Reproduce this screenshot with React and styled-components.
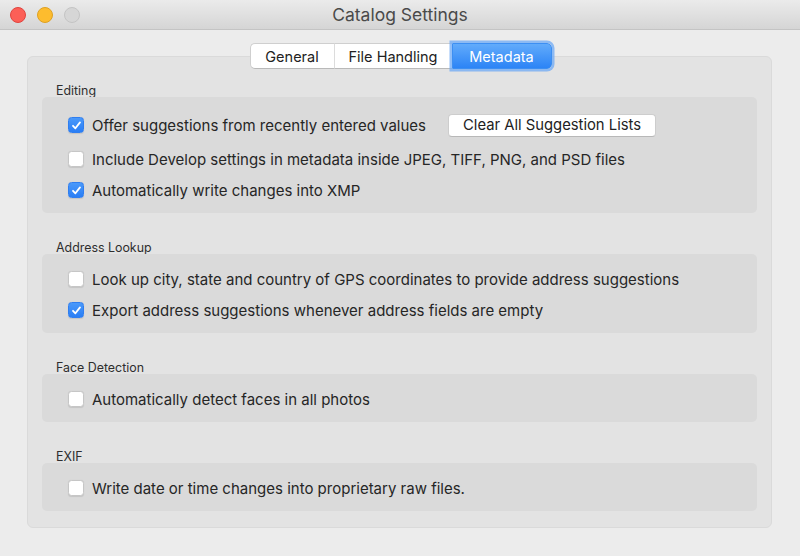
import styled, { createGlobalStyle } from "styled-components";

const GlobalStyle = createGlobalStyle`
  html, body {
    margin: 0;
    padding: 0;
    background: #ececec;
  }
  * {
    box-sizing: border-box;
  }
`;

const Window = styled.div`
  width: 800px;
  height: 556px;
  display: flex;
  flex-direction: column;
  background: #ececec;
  font-family: Inter, "Noto Sans", sans-serif;
  color: #262626;
  overflow: hidden;
`;

const TitleBar = styled.div`
  height: 30px;
  flex-shrink: 0;
  display: flex;
  align-items: center;
  padding-left: 10px;
  background: linear-gradient(#ebebeb, #d5d5d5);
  border-bottom: 1px solid #c4c4c4;
  position: relative;
`;

const Lights = styled.div`
  display: flex;
  gap: 11px;
`;

const Light = styled.span`
  width: 16px;
  height: 16px;
  border-radius: 50%;
  background: ${({ color }) => color};
  border: 1px solid ${({ edge }) => edge};
`;

const Title = styled.div`
  position: absolute;
  left: 0;
  right: 0;
  text-align: center;
  font-size: 17.5px;
  color: #4a4a4a;
  pointer-events: none;
`;

const Body = styled.div`
  flex: 1;
  display: flex;
  flex-direction: column;
  padding: 13px 28px 28px 27px;
`;

const Tabs = styled.div`
  align-self: center;
  display: flex;
  height: 26px;
  margin-left: 2px;
  position: relative;
  z-index: 1;
`;

const Tab = styled.div`
  width: ${({ w }) => w}px;
  display: flex;
  align-items: center;
  justify-content: center;
  font-size: 14.5px;
  background: #fff;
  border-top: 1px solid #cfcfcf;
  border-bottom: 1px solid #b9b9b9;
  border-left: 1px solid #dcdcdc;
  color: #222;

  &:first-child {
    border-left: 1px solid #cfcfcf;
    border-radius: 5px 0 0 5px;
  }

  ${({ active }) =>
    active &&
    `
    background: linear-gradient(#62abfb, #2c84f6);
    color: #fff;
    border: 1px solid #3d8ff2;
    border-radius: 0 5px 5px 0;
    box-shadow: 0 0 0 2.5px rgba(110, 170, 245, 0.75);
  `}
`;

const Panel = styled.div`
  flex: 1;
  margin-top: -13px;
  background: #e3e3e3;
  border: 1px solid #dadada;
  border-radius: 6px;
  padding: 24px 14px 15px;
  display: flex;
  flex-direction: column;
  gap: 25px;
`;

const Group = styled.div`
  display: flex;
  flex-direction: column;
`;

const GroupLabel = styled.div`
  font-size: 12.4px;
  line-height: 13px;
  padding-top: 3px;
  padding-left: 14px;
  color: #2e2e2e;
`;

const Box = styled.div`
  background: #dadada;
  border-radius: 5px;
  padding: 14px 26px 12px;
  display: flex;
  flex-direction: column;
  gap: 9px;
`;

const Row = styled.label`
  display: flex;
  align-items: center;
  min-height: ${({ tall }) => (tall ? 28 : 22)}px;
  font-size: 15px;
  color: #262626;
`;

const CheckBox = styled.span`
  width: 16px;
  height: 16px;
  flex-shrink: 0;
  margin-right: 8px;
  border-radius: 3.5px;
  display: flex;
  align-items: center;
  justify-content: center;
  background: ${({ checked }) =>
    checked ? "linear-gradient(#4a99fa, #2a7ef5)" : "#ffffff"};
  border: 1px solid ${({ checked }) => (checked ? "#2f7ef0" : "#c6c6c6")};
  box-shadow: 0 0.5px 1px rgba(0, 0, 0, 0.1);
`;

const Button = styled.button`
  margin-left: 22px;
  height: 23px;
  width: 208px;
  padding: 0 12px;
  background: #fff;
  border: 1px solid #cdcdcd;
  border-bottom-color: #b8b8b8;
  border-radius: 4px;
  font-family: inherit;
  font-size: 14.8px;
  color: #222;
`;

function Check({ checked }) {
  return (
    <CheckBox checked={checked}>
      {checked && (
        <svg width="11" height="11" viewBox="0 0 11 11">
          <path
            d="M2 5.8 L4.4 8.3 L9 2.4"
            fill="none"
            stroke="#fff"
            strokeWidth="1.8"
            strokeLinecap="round"
            strokeLinejoin="round"
          />
        </svg>
      )}
    </CheckBox>
  );
}

const groups = [
  {
    label: "Editing",
    rows: [
      { text: "Offer suggestions from recently entered values", checked: true, button: "Clear All Suggestion Lists" },
      { text: "Include Develop settings in metadata inside JPEG, TIFF, PNG, and PSD files", checked: false },
      { text: "Automatically write changes into XMP", checked: true },
    ],
  },
  {
    label: "Address Lookup",
    rows: [
      { text: "Look up city, state and country of GPS coordinates to provide address suggestions", checked: false },
      { text: "Export address suggestions whenever address fields are empty", checked: true },
    ],
  },
  {
    label: "Face Detection",
    rows: [{ text: "Automatically detect faces in all photos", checked: false }],
  },
  {
    label: "EXIF",
    rows: [{ text: "Write date or time changes into proprietary raw files.", checked: false }],
  },
];

export default function App() {
  return (
    <>
      <GlobalStyle />
      <Window>
        <TitleBar>
          <Lights>
            <Light color="#fc5f57" edge="#e0443e" />
            <Light color="#fdbc2e" edge="#dea123" />
            <Light color="#d6d6d6" edge="#c4c4c4" />
          </Lights>
          <Title>Catalog Settings</Title>
        </TitleBar>
        <Body>
          <Tabs>
            <Tab w={84}>General</Tab>
            <Tab w={118}>File Handling</Tab>
            <Tab w={100} active>
              Metadata
            </Tab>
          </Tabs>
          <Panel>
            {groups.map((g) => (
              <Group key={g.label}>
                <GroupLabel>{g.label}</GroupLabel>
                <Box>
                  {g.rows.map((r) => (
                    <Row key={r.text} tall={!!r.button}>
                      <Check checked={r.checked} />
                      {r.text}
                      {r.button && <Button>{r.button}</Button>}
                    </Row>
                  ))}
                </Box>
              </Group>
            ))}
          </Panel>
        </Body>
      </Window>
    </>
  );
}
